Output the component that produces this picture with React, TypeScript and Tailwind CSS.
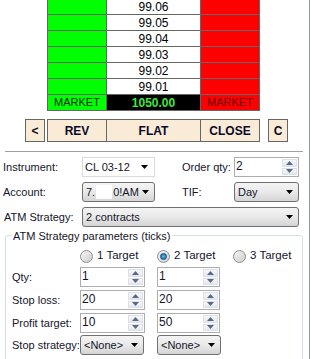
import React from "react";

const prices = ["99.06", "99.05", "99.04", "99.03", "99.02", "99.01"];

function Arrow() {
    return (
        <svg width="7" height="4" viewBox="0 0 7 4" className="shrink-0">
            <path d="M0 0h7L3.5 4z" fill="#000" />
        </svg>
    );
}

function Combo({ w, children }: { w: string; children: React.ReactNode }) {
    return (
        <div
            className={`flex h-[20px] items-center rounded-[3px] border border-[#707070] bg-linear-to-b from-[#f4f4f4] via-[#e9e9e9] to-[#d4d4d4] pl-[3px] pr-[5px] ${w}`}
        >
            <span className="flex flex-1 items-center whitespace-nowrap">{children}</span>
            <Arrow />
        </div>
    );
}

function Spin({ w, value }: { w: string; value: string }) {
    return (
        <div className={`flex h-[20px] border border-[#abadb3] bg-white ${w}`}>
            <span className="flex-1 pl-[1px] text-[12px] leading-[16px]">{value}</span>
            <div className="my-[1px] mr-[1px] flex w-[15px] flex-col gap-px">
                <div className="flex flex-1 items-center justify-center border border-[#dde1e6] bg-linear-to-b from-[#f6f7f9] to-[#e4e8ee]">
                    <svg width="7" height="4" viewBox="0 0 7 4">
                        <path d="M0 4h7L3.5 0z" fill="#56698a" />
                    </svg>
                </div>
                <div className="flex flex-1 items-center justify-center border border-[#dde1e6] bg-linear-to-b from-[#f6f7f9] to-[#e4e8ee]">
                    <svg width="7" height="4" viewBox="0 0 7 4">
                        <path d="M0 0h7L3.5 4z" fill="#56698a" />
                    </svg>
                </div>
            </div>
        </div>
    );
}

function Radio({ on, label }: { on?: boolean; label: string }) {
    return (
        <div className="flex items-center gap-[4px]">
            <div className="flex h-[13px] w-[13px] items-center justify-center rounded-full border border-[#8e8f8f] bg-linear-to-br from-[#f4f4f4] to-[#cfcfcf]">
                {on && (
                    <div className="h-[7px] w-[7px] rounded-full border border-[#1c4a7a] bg-radial from-[#4fc3f0] to-[#145c9e]" />
                )}
            </div>
            <span className="text-[11.5px]">{label}</span>
        </div>
    );
}

function Cell({ className, children }: { className: string; children?: React.ReactNode }) {
    return <div className={`flex h-[15px] items-center justify-center ${className}`}>{children}</div>;
}

export default function App() {
    return (
        <div
            className="h-[359px] w-[310px] overflow-hidden border-r border-[#8f9aa8] bg-white text-[11px] text-[#15152a]"
            style={{ fontFamily: '"Liberation Sans", Arial, sans-serif' }}
        >
            {/* price ladder */}
            <div className="ml-[47px] mt-[-2px] grid w-[213px] grid-cols-[58px_93px_58px] gap-px border border-[#666] bg-[#666]">
                {prices.map((p) => (
                    <React.Fragment key={p}>
                        <Cell className="bg-[#00ff00]" />
                        <Cell className="bg-white text-[12px] text-black">{p}</Cell>
                        <Cell className="bg-[#ff0000]" />
                    </React.Fragment>
                ))}
                <Cell className="bg-[#00ff00] text-[11px] text-[#0b2a0b]">MARKET</Cell>
                <Cell className="bg-black text-[12px] font-bold text-[#3ee83e]">1050.00</Cell>
                <Cell className="bg-[#ff0000] text-[11px] text-[#6e0000]">MARKET</Cell>
            </div>

            {/* action buttons */}
            <div className="mt-[8px] flex h-[23px] text-[12px] font-bold text-[#0a0a28]">
                <div className="ml-[25px] flex w-[20px] items-center justify-center border border-[#666] bg-[#faebd7]">
                    &lt;
                </div>
                <div className="ml-[2px] grid w-[213px] grid-cols-[58px_93px_58px] gap-px border border-[#666] bg-[#666]">
                    <div className="flex items-center justify-center bg-[#faebd7]">REV</div>
                    <div className="flex items-center justify-center bg-[#faebd7]">FLAT</div>
                    <div className="flex items-center justify-center bg-[#faebd7]">CLOSE</div>
                </div>
                <div className="ml-[8px] flex w-[20px] items-center justify-center border border-[#666] bg-[#faebd7]">
                    C
                </div>
            </div>

            <div className="ml-[5px] mt-[9px] h-px w-[298px] bg-[#a0a0a0]" />

            {/* order form */}
            <div className="mt-[5px] flex h-[20px] items-center">
                <span className="w-[82px] pl-[3px]">Instrument:</span>
                <div className="flex h-[20px] w-[73px] items-center border border-[#dadada] bg-white pl-[2px] pr-[6px]">
                    <span className="flex-1">CL 03-12</span>
                    <Arrow />
                </div>
                <span className="ml-[27px] w-[52px] whitespace-nowrap">Order qty:</span>
                <Spin w="w-[65px]" value="2" />
            </div>
            <div className="mt-[5px] flex h-[20px] items-center">
                <span className="w-[82px] pl-[3px]">Account:</span>
                <Combo w="w-[73px]">
                    <span>7.</span>
                    <span className="mx-[1px] inline-block h-[14px] w-[16px] bg-white" />
                    <span>0!AM</span>
                </Combo>
                <span className="ml-[27px] w-[52px]">TIF:</span>
                <Combo w="w-[65px]">Day</Combo>
            </div>
            <div className="mt-[5px] flex h-[20px] items-center">
                <span className="w-[82px] pl-[4px]">ATM Strategy:</span>
                <Combo w="w-[217px]">2 contracts</Combo>
            </div>

            {/* ATM strategy group */}
            <div className="ml-[5px] mt-[8px] h-[200px] w-[298px] rounded-[3px] border border-[#d5dfe5]">
                <div className="ml-[6px] mt-[-7px] w-fit bg-white px-px leading-[14px]">
                    ATM Strategy parameters (ticks)
                </div>
                <div className="ml-[74px] mt-[5px] flex h-[16px] items-center">
                    <div className="w-[77px]">
                        <Radio label="1 Target" />
                    </div>
                    <div className="w-[76px]">
                        <Radio on label="2 Target" />
                    </div>
                    <Radio label="3 Target" />
                </div>
                <div className="mt-[3px] flex h-[20px] items-center">
                    <span className="w-[74px] pl-[6px]">Qty:</span>
                    <Spin w="w-[65px]" value="1" />
                    <div className="ml-[12px]">
                        <Spin w="w-[63px]" value="1" />
                    </div>
                </div>
                <div className="mt-[3px] flex h-[20px] items-center">
                    <span className="w-[74px] pl-[6px]">Stop loss:</span>
                    <Spin w="w-[65px]" value="20" />
                    <div className="ml-[12px]">
                        <Spin w="w-[63px]" value="20" />
                    </div>
                </div>
                <div className="mt-[3px] flex h-[20px] items-center">
                    <span className="w-[74px] pl-[6px]">Profit target:</span>
                    <Spin w="w-[65px]" value="10" />
                    <div className="ml-[12px]">
                        <Spin w="w-[63px]" value="50" />
                    </div>
                </div>
                <div className="mt-[2px] flex h-[20px] items-center">
                    <span className="w-[74px] whitespace-nowrap pl-[6px]">Stop strategy:</span>
                    <Combo w="w-[64px]">&lt;None&gt;</Combo>
                    <div className="ml-[13px]">
                        <Combo w="w-[64px]">&lt;None&gt;</Combo>
                    </div>
                </div>
            </div>
        </div>
    );
}
